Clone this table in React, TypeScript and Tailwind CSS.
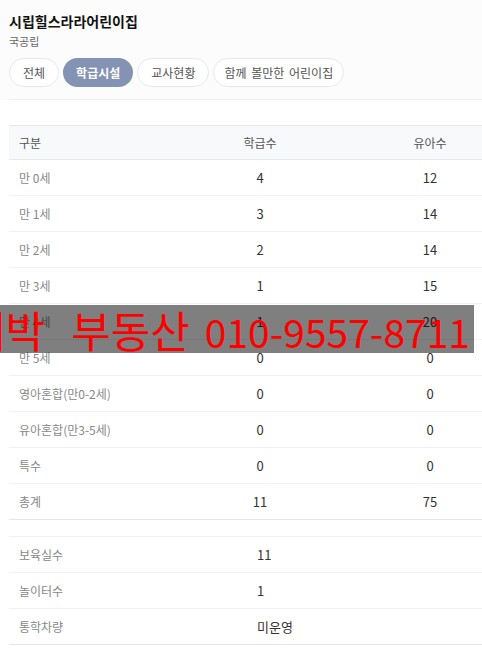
import React from "react";

const font = { fontFamily: '"Noto Sans CJK KR", "Noto Sans", sans-serif' };

const rows: [string, string, string][] = [
  ["만 0세", "4", "12"],
  ["만 1세", "3", "14"],
  ["만 2세", "2", "14"],
  ["만 3세", "1", "15"],
  ["만 4세", "1", "20"],
  ["만 5세", "0", "0"],
  ["영아혼합(만0-2세)", "0", "0"],
  ["유아혼합(만3-5세)", "0", "0"],
  ["특수", "0", "0"],
  ["총계", "11", "75"],
];

const extra: [string, string][] = [
  ["보육실수", "11"],
  ["놀이터수", "1"],
  ["통학차량", "미운영"],
];

export default function App() {
  return (
    <div className="relative w-[482px] min-h-[660px] overflow-hidden bg-white" style={font}>
      <div className="bg-[#fcfcfc] pl-[9px] pt-[11px]">
        <div className="text-[14px] leading-[20px] font-bold text-[#111]">시립힐스라라어린이집</div>
        <div className="mt-[2px] text-[11px] leading-[16px] text-[#666]">국공립</div>
        <div className="mt-[9px] flex gap-1">
          <div className="flex h-[29px] items-center rounded-full border border-[#e6e8ee] bg-white px-[13px] text-[12px] text-[#555]">전체</div>
          <div className="flex h-[29px] items-center rounded-full bg-[#8493b4] px-[13px] text-[12px] font-bold text-white">학급시설</div>
          <div className="flex h-[29px] items-center rounded-full border border-[#e6e8ee] bg-white px-[13px] text-[12px] text-[#555]">교사현황</div>
          <div className="flex h-[29px] items-center rounded-full border border-[#e6e8ee] bg-white px-[10px] text-[12px] text-[#555] [word-spacing:2px]">함께 볼만한 어린이집</div>
        </div>
        <div className="mt-[12px] h-px bg-[#f0f0f2]" />
      </div>
      <div className="pl-[9px] pt-[25px]">
        <div className="w-[506px]">
          <div className="grid h-[35px] grid-cols-[166px_170px_170px] items-center border-y border-[#e8e8e8] bg-[#f8f9fb] text-[12px] text-[#555]">
            <div className="pl-[10px]">구분</div>
            <div className="text-center">학급수</div>
            <div className="text-center">유아수</div>
          </div>
          {rows.map((r, i) => (
            <div
              key={r[0]}
              className={`grid h-[36px] grid-cols-[166px_170px_170px] items-center border-b ${i === rows.length - 1 ? "border-[#e6e6e6]" : "border-[#f1f1f1]"}`}
            >
              <div className="pl-[10px] text-[12px] text-[#888]">{r[0]}</div>
              <div className="text-center text-[13px] text-[#333]">{r[1]}</div>
              <div className="text-center text-[13px] text-[#333]">{r[2]}</div>
            </div>
          ))}
          <div className="mt-[16px] border-t border-[#f1f1f1]">
            {extra.map((r, i) => (
              <div
                key={r[0]}
                className={`grid h-[36px] grid-cols-[248px_1fr] items-center border-b ${i === extra.length - 1 ? "border-[#e6e6e6]" : "border-[#f1f1f1]"}`}
              >
                <div className="pl-[10px] text-[12px] text-[#888]">{r[0]}</div>
                <div className="text-[13px] text-[#333]">{r[1]}</div>
              </div>
            ))}
          </div>
        </div>
      </div>
      <div className="absolute left-[-34px] top-[305px] flex h-[48px] items-baseline whitespace-nowrap bg-black/50 pr-[4px] leading-[48px] text-[#ff0000]">
        <span className="text-[43px]">대박</span>
        <span className="ml-[26px] text-[43px]">부동산</span>
        <span className="ml-[15px] text-[39px]">010-9557-8711</span>
      </div>
    </div>
  );
}
